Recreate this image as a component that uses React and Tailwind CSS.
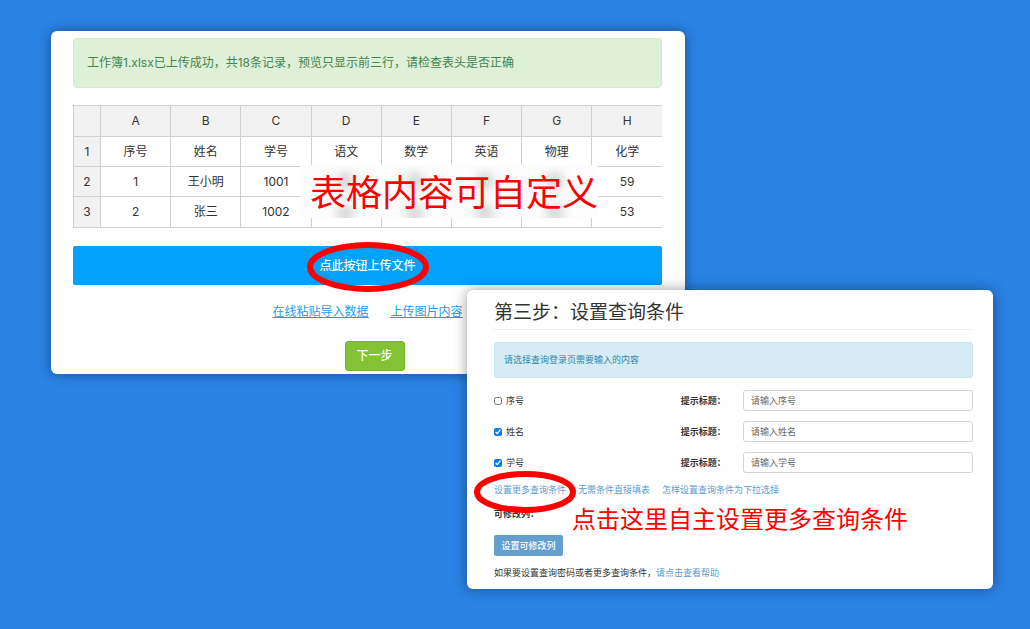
import React from 'react';

const COLUMNS = ['A', 'B', 'C', 'D', 'E', 'F', 'G', 'H'];

const ROWS = [
  ['序号', '姓名', '学号', '语文', '数学', '英语', '物理', '化学'],
  ['1', '王小明', '1001', '', '', '', '', '59'],
  ['2', '张三', '1002', '', '', '', '', '53'],
];

const CONDITIONS = [
  { id: 'index', label: '序号', checked: false },
  { id: 'name', label: '姓名', checked: true },
  { id: 'number', label: '学号', checked: true },
];

// Hand-drawn style red ring laid over a control
function Ring({ className, width, height }) {
  return (
    <svg
      className={`absolute pointer-events-none ${className}`}
      width={width}
      height={height}
      viewBox={`0 0 ${width} ${height}`}
      fill="none"
      aria-hidden="true"
    >
      <ellipse
        cx={width / 2}
        cy={height / 2}
        rx={width / 2 - 3}
        ry={height / 2 - 3}
        stroke="#ff0000"
        strokeWidth="6"
      />
    </svg>
  );
}

function PreviewTable() {
  return (
    <div className="relative mt-[17px]">
      <table className="w-full table-fixed border-collapse border-y border-l border-[#d0d0d0] text-center text-[12px] leading-4 text-[#333]">
        <thead>
          <tr className="h-[31px] bg-[#f2f2f2]">
            <th className="w-[27px]" />
            {COLUMNS.map((col) => (
              <th key={col} className="border-l border-[#d0d0d0] font-normal">{col}</th>
            ))}
          </tr>
        </thead>
        <tbody>
          {ROWS.map((row, i) => (
            <tr key={i} className="h-[30px] border-t border-[#d0d0d0] last:h-[31px]">
              <th className="bg-[#f2f2f2] font-normal">{i + 1}</th>
              {row.map((cell, j) => (
                <td key={j} className="border-l border-[#d0d0d0]">{cell}</td>
              ))}
            </tr>
          ))}
        </tbody>
      </table>

      {/* Blurred-out scores with the red caption on top */}
      <div className="absolute left-[227px] top-[60px] h-[53px] w-[298px] overflow-hidden bg-[#fdfdfd] pl-[10px]">
        <div className="flex">
          {COLUMNS.slice(3, 7).map((col) => (
            <div key={col} className="flex w-[70px] flex-col items-center gap-4 pt-2">
              <div className="h-4 w-4 rounded-full bg-black/20 blur-[6px]" />
              <div className="h-4 w-4 rounded-full bg-black/20 blur-[6px]" />
            </div>
          ))}
        </div>
        <p className="absolute inset-0 pl-[10px] text-[36px] leading-[56px] whitespace-nowrap text-[#ff0000]">
          表格内容可自定义
        </p>
      </div>
    </div>
  );
}

function UploadCard() {
  return (
    <section className="w-full max-w-[634px] rounded-md bg-white pt-[7px] pr-[23px] pb-[3px] pl-[22px] shadow-[0_0_12px_rgba(0,0,0,0.4)]">
      <div className="rounded border border-[#d6e9c6] bg-[#dff0d8] px-[13px] py-4 text-[12px] leading-4 text-[#43854a]">
        工作簿1.xlsx已上传成功，共18条记录，预览只显示前三行，请检查表头是否正确
      </div>

      <PreviewTable />

      <button type="button" className="mt-[18px] block h-[39px] w-full rounded-xs bg-[#00a2fb] text-[12px] leading-4 font-medium text-white">
        <span className="relative">
          点此按钮上传文件
          <Ring className="-left-3 -top-4 max-w-none" width={122} height={50} />
        </span>
      </button>

      <div className="mt-[19px] flex justify-center gap-[22px] text-[12px] leading-4 text-[#1a9df5] underline">
        <a href="#paste">在线粘贴导入数据</a>
        <a href="#image">上传图片内容</a>
      </div>

      <div className="mt-[21px] flex justify-center pl-[14px]">
        <button type="button" className="h-[30px] w-[60px] rounded-[3px] border border-[#78b32c] bg-[#82c234] text-[12px] leading-4 font-medium text-white">
          下一步
        </button>
      </div>
    </section>
  );
}

function ConditionRow({ id, label, checked }) {
  return (
    <div className="grid grid-cols-[39fr_13fr_48fr] items-center">
      <label className="flex items-center gap-1">
        <input type="checkbox" defaultChecked={checked} className="size-2 accent-[#0a7cf5]" />
        {label}
      </label>
      <label htmlFor={id} className="font-bold">提示标题：</label>
      <input
        id={id}
        type="text"
        placeholder={`请输入${label}`}
        className="h-[21px] w-full rounded-[3px] border border-[#d4d4d4] px-[7px] placeholder:text-[#666]"
      />
    </div>
  );
}

function ConditionCard() {
  return (
    <section className="relative -mt-[84px] ml-auto w-full max-w-[526px] rounded-md bg-white pt-[9px] pr-5 pb-[10px] pl-[27px] text-[9px] leading-3 text-[#333] shadow-[0_0_14px_rgba(0,0,0,0.4)]">
      <h2 className="border-b border-[#eee] pb-0.5 text-[19px] leading-7">第三步：设置查询条件</h2>

      <div className="mt-3 rounded-[3px] border border-[#c4e8f0] bg-[#d5ecf5] px-[9px] py-[11px] text-[#2f86a8]">
        请选择查询登录页需要输入的内容
      </div>

      <div className="mt-3 flex flex-col gap-[10px]">
        {CONDITIONS.map((item) => (
          <ConditionRow key={item.id} {...item} />
        ))}
      </div>

      <div className="mt-[11px] flex gap-3 text-[#5b9bd0]">
        <a href="#more" className="relative">
          设置更多查询条件
          <Ring className="-left-5 -top-[13px] z-10 max-w-none" width={102} height={42} />
        </a>
        <a href="#direct">无需条件直接填表</a>
        <a href="#select">怎样设置查询条件为下拉选择</a>
      </div>

      <div className="relative mt-3">
        <p className="font-bold">可修改列：</p>
        <p className="absolute left-[78px] -top-[6px] text-[24px] leading-9 whitespace-nowrap text-[#ff0000]">
          点击这里自主设置更多查询条件
        </p>
      </div>

      <button type="button" className="mt-[15px] block h-[21px] w-[69px] rounded-xs bg-[#659fd0] font-medium text-white">
        设置可修改列
      </button>

      <p className="mt-[11px]">
        如果要设置查询密码或者更多查询条件，
        <a href="#help" className="text-[#5b9bd0]">请点击查看帮助</a>
      </p>
    </section>
  );
}

function App() {
  return (
    <main className="min-h-screen bg-[#2a82e4] pt-[31px] pr-[37px] pb-10 pl-[51px] font-[Inter,'Noto_Sans_CJK_SC',sans-serif]">
      <UploadCard />
      <ConditionCard />
    </main>
  );
}

export default App;
